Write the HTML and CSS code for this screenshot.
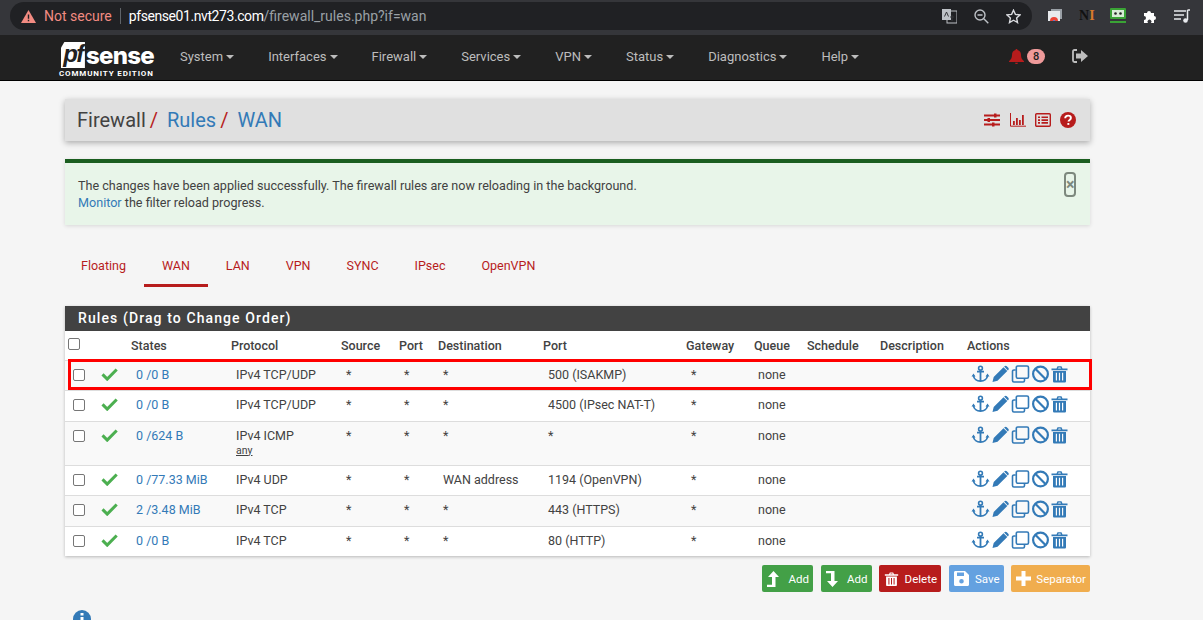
FILE: index.html
```html
<!DOCTYPE html>

<html>

<head>
    <title> pfSense - Firewall: Rules: WAN </title>
    <link rel="stylesheet" href="styles.css">
</head>

<body>
    <svg class="defs" width="0" height="0">
        <symbol id="i-anchor" viewBox="0 0 18 18">
            <circle cx="9" cy="3.2" r="1.9" fill="none" stroke="currentColor" stroke-width="1.6" />
            <path d="M5.5 6.6h7M9 5v11M2 10.5c.3 3.6 3.4 5.6 7 5.6s6.7-2 7-5.6" fill="none" stroke="currentColor" stroke-width="1.8" />
            <path d="M0 11.5l2-3 2 3zM14 11.5l2-3 2 3z" fill="currentColor" />
        </symbol>
        <symbol id="i-pencil" viewBox="0 0 18 18">
            <path d="M1 17l1.2-5L12 2.2l3.8 3.8L6 15.8zM13 1.2c.7-.7 1.7-.7 2.3 0l1.5 1.5c.6.6.6 1.6 0 2.3l-.4.4-3.8-3.8z" fill="currentColor" />
        </symbol>
        <symbol id="i-copy" viewBox="0 0 18 18">
            <rect x="4.8" y="1" width="12.2" height="12.2" rx="1.4" fill="none" stroke="currentColor" stroke-width="1.6" />
            <path d="M4.2 5H2.4C1.6 5 1 5.6 1 6.4v9.2c0 .8.6 1.4 1.4 1.4h9.2c.8 0 1.4-.6 1.4-1.4v-1.8" fill="none" stroke="currentColor" stroke-width="1.6" />
        </symbol>
        <symbol id="i-ban" viewBox="0 0 18 18">
            <circle cx="9" cy="9" r="7.4" fill="none" stroke="currentColor" stroke-width="2.2" />
            <path d="M3.8 3.8l10.4 10.4" stroke="currentColor" stroke-width="2.2" />
        </symbol>
        <symbol id="i-trash" viewBox="0 0 18 18">
            <path d="M1 3.4h16v1.8H1zM6 3.4l1-2.2h4l1 2.2h-1.500l-.6-1H8.100l-.6 1z" fill="currentColor" />
            <path fill-rule="evenodd" d="M2.500 6h13v10.200c0 .7-.6 1.300-1.300 1.300H3.800c-.7 0-1.300-.6-1.300-1.300zM5.300 7.800v7.800h1.200V7.800zM8.400 7.800v7.800h1.200V7.800zM11.500 7.800v7.800h1.200V7.800z" fill="currentColor" />
        </symbol>
        <symbol id="i-check" viewBox="0 0 18 14">
            <path d="M1.600 7.400l5 5L16.600 2.200" fill="none" stroke="currentColor" stroke-width="3.200" />
        </symbol>
    </svg>

    <div class="browser">
        <div class="omnibox">
            <svg class="warn" width="15" height="13" viewBox="0 0 15 13"><path d="M7.500 0L15 13H0z" fill="#f28b82" /><path d="M6.800 4.500h1.400v4.200H6.800zM6.800 9.800h1.400v1.400H6.800z" fill="#202124" /></svg>
            <span class="insecure">Not secure</span>
            <span class="url"><b>pfsense01.nvt273.com</b>/firewall_rules.php?if=wan</span>
            <div class="omni-icons">
                <svg width="15" height="15" viewBox="0 0 15 15"><rect x="5" y="2" width="10" height="12" fill="none" stroke="#bdc1c6" /><rect width="9" height="11" fill="#bdc1c6" /><path d="M2.500 7.500l2-4.500 2 4.500M10 6v6M8 8h4" fill="none" stroke="#35363a" /></svg>
                <svg width="15" height="15" viewBox="0 0 15 15"><circle cx="6" cy="6" r="5" fill="none" stroke="#bdc1c6" stroke-width="1.400" /><path d="M3.500 6h5M9.800 9.800l4.500 4.500" stroke="#bdc1c6" stroke-width="1.400" /></svg>
                <svg width="15" height="15" viewBox="0 0 15 15"><path d="M7.500 1.200l1.900 4.200 4.600.5-3.400 3.100.9 4.500-4-2.300-4 2.300.9-4.500L1 5.900l4.600-.5z" fill="none" stroke="#dadce0" stroke-width="1.400" /></svg>
            </div>
        </div>
        <div class="extensions">
            <svg width="14" height="14" viewBox="0 0 14 14"><rect x="3" width="11" height="10" fill="#9aa0a6" /><rect y="2" width="12" height="10" fill="#e8eaed" /><path d="M2 12a4 4 0 0 1 8 0z" fill="#ea4335" /><path d="M5 12a1 1 0 0 1 2 0z" fill="#4285f4" /></svg>
            <span class="ext-n">N<i>I</i></span>
            <svg width="16" height="16" viewBox="0 0 16 16"><rect width="16" height="11" rx="1" fill="#3aa335" /><rect x="2" y="2" width="12" height="7" fill="#d7ecd5" /><circle cx="5.500" cy="5.500" r="1.300" fill="#222" /><circle cx="10.500" cy="5.500" r="1.300" fill="#222" /><rect y="13" width="16" height="2" fill="#3aa335" /></svg>
            <svg width="14" height="14" viewBox="0 0 14 14"><path d="M1 4h3a2 2 0 1 1 4 0h3v3a2 2 0 1 1 0 4v3H8a2 2 0 1 0-3 0H1v-3a2 2 0 1 0 0-4z" fill="#fff" /></svg>
            <svg width="16" height="14" viewBox="0 0 16 14"><path d="M0 2h12M0 6h10M0 10h7M13.500 1v10" stroke="#e8eaed" stroke-width="1.500" /><path d="M13.500 1H16" stroke="#e8eaed" stroke-width="1.500" /><circle cx="11.500" cy="11.500" r="2.300" fill="#e8eaed" /></svg>
        </div>
    </div>

    <nav class="topnav">
        <div class="brand">
            <div class="brand-top"><span class="pf">pf</span><span class="sense">sense</span></div>
            <div class="edition">COMMUNITY EDITION</div>
        </div>
        <ul class="menu">
            <li>System</li>
            <li>Interfaces</li>
            <li>Firewall</li>
            <li>Services</li>
            <li>VPN</li>
            <li>Status</li>
            <li>Diagnostics</li>
            <li>Help</li>
        </ul>
        <div class="nav-right">
            <svg class="bell" width="15" height="15" viewBox="0 0 15 15"><path d="M7.500 0c.7 0 1 .5 1 1 2.500.5 3.500 2.500 3.500 5 0 2.500.8 4.500 3 6.200V13H0v-.8C2.200 10.500 3 8.500 3 6c0-2.500 1-4.500 3.500-5 0-.5.300-1 1-1zM6 13.800h3c0 .8-.7 1.200-1.500 1.200S6 14.600 6 13.800z" fill="#b71c1c" /></svg>
            <span class="badge">8</span>
            <svg class="logout" width="16" height="14" viewBox="0 0 16 14"><path d="M5 1H2.500C1.500 1 1 1.600 1 2.500v9c0 .9.500 1.500 1.500 1.500H5" fill="none" stroke="#bdbdbd" stroke-width="1.800" /><path d="M4 4.500h5V1l7 6-7 6V9.500H4z" fill="#bdbdbd" /></svg>
        </div>
    </nav>

    <main class="page">
        <div class="crumbs">
            <h1>Firewall<em>/</em><a>Rules</a><em>/</em><a>WAN</a></h1>
            <div class="crumb-icons">
                <svg width="18" height="14" viewBox="0 0 18 14"><path d="M1 2.500h16M1 7h16M1 11.500h16" stroke="#b71c1c" stroke-width="1.800" /><path d="M11 .5h2.500v4H11zM4.500 5H7v4H4.500zM9 9.500h2.500v4H9z" fill="#b71c1c" /></svg>
                <svg width="16" height="14" viewBox="0 0 16 14"><path d="M.5 0v13.200H16" fill="none" stroke="#b71c1c" /><path d="M3 8h1.800v4H3zM6 5h1.800v7H6zM9 7h1.800v5H9zM12 2h1.800v10H12z" fill="#b71c1c" /></svg>
                <svg width="16" height="14" viewBox="0 0 16 14"><rect x=".7" y=".7" width="14.600" height="12.600" rx="1" fill="none" stroke="#b71c1c" stroke-width="1.400" /><path d="M3 3.500h2v1.600H3zM6.500 3.500H13v1.600H6.500zM3 6.300h2v1.600H3zM6.500 6.300H13v1.600H6.500zM3 9.100h2v1.600H3zM6.500 9.100H13v1.600H6.500z" fill="#b71c1c" /></svg>
                <svg width="16" height="16" viewBox="0 0 16 16"><circle cx="8" cy="8" r="8" fill="#b71c1c" /><path d="M5.200 6.200c0-1.700 1.200-2.600 2.900-2.600 1.700 0 2.800 1 2.800 2.300 0 2-2.400 2-2.400 3.700" fill="none" stroke="#fff" stroke-width="1.900" /><path d="M7.400 11h1.900v1.900H7.400z" fill="#fff" /></svg>
            </div>
        </div>

        <div class="alert">
            <p>The changes have been applied successfully. The firewall rules are now reloading in the background.<br><a>Monitor</a> the filter reload progress.</p>
            <span class="close">×</span>
        </div>

        <ul class="tabs">
            <li>Floating</li>
            <li class="active">WAN</li>
            <li>LAN</li>
            <li>VPN</li>
            <li>SYNC</li>
            <li>IPsec</li>
            <li>OpenVPN</li>
        </ul>

        <div class="panel">
            <h2>Rules (Drag to Change Order)</h2>
            <div class="mark"></div>
            <table>
                <colgroup>
                    <col class="c-sel"><col class="c-on"><col class="c-states"><col class="c-proto"><col class="c-src"><col class="c-port"><col class="c-dest"><col class="c-dport"><col class="c-gw"><col class="c-queue"><col class="c-sched"><col class="c-desc"><col>
                </colgroup>
                <thead>
                    <tr>
                        <th class="head-box"><span class="box"></span></th>
                        <th></th>
                        <th>States</th>
                        <th>Protocol</th>
                        <th>Source</th>
                        <th>Port</th>
                        <th>Destination</th>
                        <th>Port</th>
                        <th>Gateway</th>
                        <th>Queue</th>
                        <th>Schedule</th>
                        <th>Description</th>
                        <th>Actions</th>
                    </tr>
                </thead>
                <tbody id="rows"></tbody>
            </table>
        </div>

        <div class="buttons">
            <button class="btn green">
                <svg width="12" height="16" viewBox="0 0 12 16"><path d="M6.500 0L12 6h-3.500v10H0v-2.200h5V6H1z" fill="#fff" /></svg>Add
            </button>
            <button class="btn green">
                <svg width="12" height="16" viewBox="0 0 12 16"><path d="M6.500 16L12 10h-3.500V0H0v2.200h5V10H1z" fill="#fff" /></svg>Add
            </button>
            <button class="btn red">
                <svg class="white" width="15" height="16"><use href="#i-trash" /></svg>Delete
            </button>
            <button class="btn blue">
                <svg width="15" height="15" viewBox="0 0 15 15"><path fill-rule="evenodd" d="M1.500 0H11l4 4v9.500c0 .9-.6 1.500-1.500 1.500h-12C.6 15 0 14.400 0 13.500v-12C0 .6.600 0 1.500 0zM3 1.500V5h7V1.500zM7.500 8a2.300 2.300 0 1 0 0 4.600 2.300 2.300 0 0 0 0-4.600z" fill="#fff" /></svg>Save
            </button>
            <button class="btn orange">
                <svg width="15" height="15" viewBox="0 0 15 15"><path d="M5.500 0h4v5.500H15v4H9.500V15h-4V9.500H0v-4h5.500z" fill="#fff" /></svg>Separator
            </button>
        </div>

        <svg class="info" width="18" height="18" viewBox="0 0 18 18"><circle cx="9" cy="9" r="9" fill="#337ab7" /><path d="M7.500 3h3v2.500h-3zM7.500 7h3v7h-3z" fill="#fff" /></svg>
    </main>

    <script>
        let rules = [
            ['0 /0 B', 'IPv4 TCP/UDP', '', '*', '500 (ISAKMP)'],
            ['0 /0 B', 'IPv4 TCP/UDP', '', '*', '4500 (IPsec NAT-T)'],
            ['0 /624 B', 'IPv4 ICMP', 'any', '*', '*'],
            ['0 /77.33 MiB', 'IPv4 UDP', '', 'WAN address', '1194 (OpenVPN)'],
            ['2 /3.48 MiB', 'IPv4 TCP', '', '*', '443 (HTTPS)'],
            ['0 /0 B', 'IPv4 TCP', '', '*', '80 (HTTP)']
        ]

        let icon = name => `<svg><use href="#i-${name}" /></svg>`

        document.getElementById('rows').innerHTML = rules.map(r => `<tr>
            <td class="sel"><span class="box"></span></td>
            <td class="on"><svg class="tick"><use href="#i-check" /></svg></td>
            <td><a>${r[0]}</a></td>
            <td>${r[1]}${r[2] ? `<br><u>${r[2]}</u>` : ''}</td>
            <td>*</td>
            <td>*</td>
            <td>${r[3]}</td>
            <td>${r[4]}</td>
            <td>*</td>
            <td class="queue">none</td>
            <td></td>
            <td></td>
            <td class="acts">${['anchor', 'pencil', 'copy', 'ban', 'trash'].map(icon).join('')}</td>
        </tr>`).join('')
    </script>
</body>

</html>
```

FILE: styles.css
```css
html,
body {
    margin: 0;
    height: 100%;
    overflow: hidden;
}

body {
    background: #f5f5f5;
    color: #424242;
    font: 13px Roboto, "Liberation Sans", sans-serif;
}

a {
    color: #337ab7;
}

.defs {
    position: absolute;
}

/* browser chrome */
.browser {
    display: flex;
    align-items: center;
    height: 35px;
    background: #35363a;
    box-sizing: border-box;
    padding: 2px 0 5px 10px;
}

.omnibox {
    display: flex;
    align-items: center;
    width: 1022px;
    height: 28px;
    background: #202124;
    border-radius: 14px;
    box-sizing: border-box;
    padding-left: 11px;
    font-size: 14px;
}

.warn {
    margin-right: 8px;
}

.insecure {
    color: #f28b82;
    padding-right: 8px;
    border-right: 1px solid #5f6368;
    line-height: 16px;
    margin-right: 8px;
}

.url {
    color: #9aa0a6;
}

.url b {
    color: #fff;
    font-weight: normal;
    letter-spacing: -.42px;
}

.omni-icons {
    margin-left: auto;
    display: flex;
    gap: 17px;
    padding-right: 11px;
}

.extensions {
    display: flex;
    align-items: center;
    gap: 17px;
    margin-left: 16px;
}

.ext-n {
    font: bold 14px "Liberation Serif", serif;
    color: #111;
    width: 14px;
    white-space: nowrap;
}

.ext-n i {
    color: #d9792b;
    font-style: normal;
}

/* top nav */
.topnav {
    display: flex;
    align-items: center;
    height: 45px;
    background: #212121;
    border-bottom: 1px solid #000;
    padding-left: 60px;
}

.brand {
    width: 94px;
    color: #fff;
}

.brand-top {
    display: flex;
    align-items: center;
    height: 26px;
    margin-top: 5px;
}

.pf {
    width: 26px;
    height: 26px;
    margin-left: 1px;
    background: #fff;
    color: #212121;
    font: italic bold 24px/24px "Liberation Sans", sans-serif;
    text-align: center;
    letter-spacing: -1.500px;
    clip-path: polygon(14% 0, 100% 0, 100% 100%, 0 100%, 0 22%);
}

.sense {
    font: 800 24px/20px Inter, sans-serif;
    letter-spacing: -.7px;
    margin-left: 1px;
    margin-top: 2px;
}

.edition {
    font: bold 8px/9px Roboto, sans-serif;
    letter-spacing: .85px;
    white-space: nowrap;
    margin: 1px 0 0 -1px;
}

.menu {
    display: flex;
    gap: 34px;
    list-style: none;
    margin: 0 0 3px 26px;
    padding: 0;
    color: #bdbdbd;
}

.menu li::after {
    content: "";
    display: inline-block;
    border: 4px solid transparent;
    border-top-color: #bdbdbd;
    border-bottom: 0;
    margin-left: 3px;
    vertical-align: 2px;
}

.nav-right {
    display: flex;
    align-items: center;
    margin: 0 0 3px 150px;
}

.bell {
    margin-right: 3px;
}

.badge {
    width: 18px;
    height: 15px;
    line-height: 15px;
    border-radius: 8px;
    background: #ef9a9a;
    color: #212121;
    font-size: 11px;
    font-weight: 500;
    text-align: center;
}

.logout {
    margin-left: 27px;
}

/* page */
.page {
    width: 1025px;
    margin-left: 65px;
}

.crumbs {
    display: flex;
    align-items: center;
    justify-content: space-between;
    height: 42px;
    margin-top: 18px;
    background: #e0e0e0;
    box-shadow: 0 2px 6px rgba(0, 0, 0, .3);
    padding: 0 14px 0 12px;
}

h1 {
    margin: 0;
    font-size: 20px;
    font-weight: normal;
}

h1 em {
    color: #b71c1c;
    font-style: normal;
    margin: 0 9px 0 4px;
}

.crumb-icons {
    display: flex;
    align-items: center;
    gap: 9px;
}

.alert {
    display: flex;
    justify-content: space-between;
    height: 62px;
    margin-top: 18px;
    background: #e8f5e9;
    border-top: 4px solid #1b5e20;
    box-shadow: 0 1px 4px rgba(0, 0, 0, .12);
    padding: 0 14px 0 13px;
}

.alert p {
    margin: 14px 0 0;
    line-height: 17px;
    font-size: 12.600px;
}

.close {
    width: 8px;
    height: 21px;
    margin-top: 9px;
    border: 2px solid #7d887e;
    border-radius: 4px;
    color: #7d887e;
    font: bold 16px/21px Roboto, sans-serif;
    text-align: center;
}

.tabs {
    display: flex;
    list-style: none;
    margin: 27px 0 0 -2px;
    padding: 0;
    color: #b71c1c;
    font-size: 12.500px;
}

.tabs li {
    padding: 0 18px;
    height: 35px;
    line-height: 27px;
}

.tabs .active {
    height: 32px;
    border-bottom: 3px solid #b71c1c;
}

.panel {
    position: relative;
    margin-top: 19px;
    background: #fff;
    box-shadow: 0 1px 3px rgba(0, 0, 0, .25);
}

h2 {
    margin: 0;
    height: 25px;
    padding-left: 13px;
    background: #424242;
    color: #fff;
    font-size: 14px;
    font-weight: 500;
    line-height: 25px;
    letter-spacing: 1.100px;
}

.mark {
    position: absolute;
    left: 3px;
    right: -2px;
    top: 53px;
    height: 31px;
    box-sizing: border-box;
    border: 3px solid #f00;
}

table {
    width: 100%;
    table-layout: fixed;
    border-collapse: collapse;
}

.c-sel { width: 35px; }
.c-on { width: 31px; }
.c-states { width: 100px; }
.c-proto { width: 110px; }
.c-src { width: 58px; }
.c-port { width: 39px; }
.c-dest { width: 105px; }
.c-dport { width: 143px; }
.c-gw { width: 68px; }
.c-queue { width: 53px; }
.c-sched { width: 73px; }
.c-desc { width: 87px; }

th {
    height: 26px;
    padding: 0;
    text-align: left;
    font-weight: 500;
    font-size: 12.500px;
    white-space: nowrap;
}

td {
    height: 30.400px;
    padding: 6px 0 6px 5px;
    box-sizing: border-box;
    border-top: 1px solid #ddd;
    line-height: 16px;
    vertical-align: top;
    font-size: 12.500px;
    white-space: nowrap;
}

tbody tr:nth-child(odd) td {
    background: #f9f9f9;
}

td u {
    font-size: 10.500px;
    line-height: 14px;
    display: block;
    margin-bottom: 1px;
}

.box {
    display: block;
    width: 10px;
    height: 10px;
    background: #fff;
    border: 1px solid #767676;
    border-radius: 2px;
}

.head-box {
    padding: 0 0 3px 3px;
}

.sel {
    padding-left: 8px;
    padding-top: 8px;
}

.on {
    padding-left: 1px;
}

.tick {
    display: block;
    width: 17px;
    height: 14px;
    color: #4caf50;
}

.queue {
    padding-left: 4px;
}

.acts {
    padding: 4px 0 0 4px;
}

.acts svg {
    width: 19px;
    height: 18px;
    color: #337ab7;
    display: inline-block;
    margin-right: 1px;
}

.acts svg:last-child {
    margin-left: -1px;
}

.buttons {
    display: flex;
    justify-content: flex-end;
    gap: 7.500px;
    margin-top: 9px;
}

.btn {
    display: flex;
    align-items: center;
    justify-content: space-between;
    height: 27px;
    border: 0;
    border-radius: 2px;
    padding: 0 4px 0 5px;
    color: #fff;
    font: 400 11.500px Roboto, sans-serif;
}

.btn:nth-child(1),
.btn:nth-child(2) { width: 51px; }
.btn:nth-child(3) { width: 62px; }
.btn:nth-child(4) { width: 55px; }
.btn:nth-child(5) { width: 79px; }

.white {
    color: #fff;
}

.green { background: #43a047; }
.red { background: #b71c1c; }
.blue { background: #64a1e0; }
.orange { background: #f0ad4e; }

.info {
    display: block;
    margin: 18px 0 0 8px;
}
```
